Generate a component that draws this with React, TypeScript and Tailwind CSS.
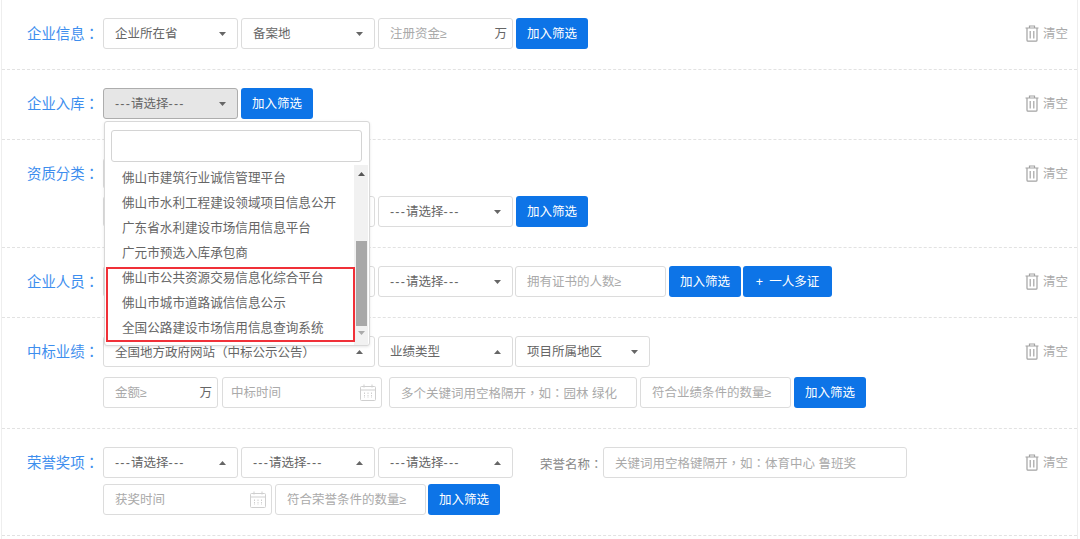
import type { ReactNode } from "react";

// 全角标点在参考图里是居中的，SC 字体偏左下，这里单独换 TC
function P({ children }: { children: ReactNode }) {
	return <span style={{ fontFamily: '"Noto Sans CJK TC", sans-serif' }}>{children}</span>;
}

const PICK = (
	<>
		<span className="tracking-[1.2px]">---</span>请选择<span className="tracking-[1.2px]">---</span>
	</>
);

function Caret({ up = false }: { up?: boolean }) {
	return (
		<svg width="7" height="4" viewBox="0 0 7 4" className="shrink-0">
			<path d={up ? "M3.5 0L7 4H0Z" : "M0 0H7L3.5 4Z"} fill="#666" />
		</svg>
	);
}

function Trash() {
	return (
		<svg width="14" height="17" viewBox="0 0 14 17" fill="none" stroke="#a3a3a3" strokeWidth="1.2">
			<path d="M0.5 3H13.5M4.5 3V1H9.5V3M2 3V15.2C2 15.8 2.4 16.2 3 16.2H11C11.6 16.2 12 15.8 12 15.2V3M5.2 6V13.5M8.8 6V13.5" />
		</svg>
	);
}

function Calendar() {
	return (
		<svg width="16" height="17" viewBox="0 0 16 17" fill="none" stroke="#cfcfcf" strokeWidth="1">
			<rect x="0.5" y="2.5" width="15" height="14" rx="1" />
			<path d="M0.5 6H15.5M4 0.5V3.5M12 0.5V3.5" />
			<path d="M4.5 8.5V14M8 8.5V14M11.5 8.5V14" strokeDasharray="1.5 1" />
		</svg>
	);
}

function Select({ text, width, up, open }: { text?: ReactNode; width: string; up?: boolean; open?: boolean }) {
	return (
		<div
			className={`${width} flex h-[31px] shrink-0 items-center justify-between rounded-[3px] border px-[11px] text-[12.5px] text-[#666] ${
				open ? "border-[#adadad] bg-[#e6e6e6]" : "border-[#dcdcdc] bg-white"
			}`}
		>
			<span className="whitespace-nowrap pt-[2px]">{text}</span>
			<Caret up={up} />
		</div>
	);
}

function Field({
	text,
	width,
	unit,
	date,
	textClass = "",
}: {
	text: ReactNode;
	width: string;
	unit?: string;
	date?: boolean;
	textClass?: string;
}) {
	return (
		<div
			className={`${width} flex h-[31px] shrink-0 items-center justify-between rounded-[3px] border border-[#dcdcdc] bg-white pl-[11px] pr-[5px] text-[12.5px] text-[#aaa]`}
		>
			<span className={`whitespace-nowrap pt-[2px] ${textClass}`}>{text}</span>
			{unit && <span className="pt-[2px] text-[#666]">{unit}</span>}
			{date && <Calendar />}
		</div>
	);
}

function FilterButton({ children = "加入筛选", width = "w-[72px]" }: { children?: ReactNode; width?: string }) {
	return (
		<button className={`${width} h-[31px] shrink-0 whitespace-nowrap rounded-[3px] bg-[#0d74e7] pt-[2px] text-[12.5px] text-white`}>
			{children}
		</button>
	);
}

function Row({ label, gap = "gap-y-0", children }: { label: string; gap?: string; children: ReactNode }) {
	return (
		<section className="flex items-start border-b border-dashed border-[#e2e2e2] pb-[20px] pt-[18px]">
			<div className="w-[101px] shrink-0 whitespace-nowrap pl-[25px] text-[14.4px] leading-[30px] text-[#3d8eee]">
				{label}
				<P>：</P>
			</div>
			<div className={`flex flex-1 flex-col ${gap}`}>{children}</div>
			<div className="mr-[9px] flex h-[31px] shrink-0 items-center gap-[4px] text-[12.5px] text-[#aaa]">
				<Trash />
				<span className="pt-[2px]">清空</span>
			</div>
		</section>
	);
}

const options = [
	"佛山市建筑行业诚信管理平台",
	"佛山市水利工程建设领域项目信息公开",
	"广东省水利建设市场信用信息平台",
	"广元市预选入库承包商",
	"佛山市公共资源交易信息化综合平台",
	"佛山市城市道路诚信信息公示",
	"全国公路建设市场信用信息查询系统",
];

function Dropdown() {
	return (
		<div className="absolute left-[1px] top-[33px] z-10 h-[225px] w-[266px] rounded-[3px] border border-[#d8d8d8] bg-white shadow-[0_1px_3px_rgba(0,0,0,0.1)]">
			<div className="mx-[6px] mt-[8px] h-[32px] w-[251px] rounded-[3px] border border-[#d4d4d4]" />
			<div className="mt-[3px] flex">
				<ul className="w-[249px]">
					{options.map((o) => (
						<li key={o} className="h-[25px] whitespace-nowrap pl-[17px] text-[12.6px] leading-[26px] text-[#666]">
							{o}
						</li>
					))}
				</ul>
				<div className="flex h-[180px] w-[14px] flex-col items-center bg-[#f1f1f1]">
					<svg width="7" height="4" viewBox="0 0 7 4" className="mt-[7px]">
						<path d="M3.5 0L7 4H0Z" fill="#555" />
					</svg>
					<div className="mt-[65px] h-[85px] w-[11px] bg-[#a8a8a8]" />
					<svg width="7" height="4" viewBox="0 0 7 4" className="mt-[5px]">
						<path d="M0 0H7L3.5 4Z" fill="#aaa" />
					</svg>
				</div>
			</div>
			<div className="absolute left-[1px] top-[145px] h-[75px] w-[249px] border-2 border-[#f03038]" />
		</div>
	);
}

export default function App() {
	return (
		<div
			className="mx-[1px] h-[539px] w-[1077px] overflow-hidden border-x border-[#eeeeee] bg-white"
			style={{ fontFamily: '"Liberation Sans", "Noto Sans CJK SC", sans-serif' }}
		>
			<Row label="企业信息">
				<div className="flex gap-[3px]">
					<Select text="企业所在省" width="w-[135px]" />
					<Select text="备案地" width="w-[134px]" />
					<Field text="注册资金≥" width="w-[135px]" unit="万" />
					<FilterButton />
				</div>
			</Row>

			<Row label="企业入库">
				<div className="flex gap-[3px]">
					<div className="relative">
						<Select text={PICK} width="w-[135px]" open />
						<Dropdown />
					</div>
					<FilterButton />
				</div>
			</Row>

			<Row label="资质分类" gap="gap-y-[7px]">
				<Select width="w-[135px]" />
				<div className="flex gap-[3px]">
					<Select width="w-[272px]" />
					<Select text={PICK} width="w-[135px]" />
					<FilterButton />
				</div>
			</Row>

			<Row label="企业人员">
				<div className="flex gap-[3px]">
					<Select width="w-[272px]" />
					<Select text={PICK} width="w-[135px]" />
					<Field text="拥有证书的人数≥" width="-ml-[1px] w-[151px]" />
					<FilterButton />
					<FilterButton width="-ml-[1px] w-[89px]">
						<span className="mr-[6px]">+</span>一人多证
					</FilterButton>
				</div>
			</Row>

			<Row label="中标业绩" gap="gap-y-[10px]">
				<div className="flex gap-[3px]">
					<Select
						text={
							<>
								全国地方政府网站<P>（</P>中标公示公告<P>）</P>
							</>
						}
						width="w-[272px]"
						up
					/>
					<Select text="业绩类型" width="w-[135px]" up />
					<Select text="项目所属地区" width="-ml-[1px] w-[135px]" />
				</div>
				<div className="flex gap-[3px]">
					<Field text="金额≥" width="w-[115px]" unit="万" />
					<Field text="中标时间" width="ml-[1px] w-[160px]" date textClass="-ml-[3px]" />
					<Field
						text={
							<>
								多个关键词用空格隔开<P>，</P>如<P>：</P>园林 绿化
							</>
						}
						width="ml-[4px] w-[248px]"
					/>
					<Field text="符合业绩条件的数量≥" width="w-[151px]" />
					<FilterButton />
				</div>
			</Row>

			<Row label="荣誉奖项" gap="gap-y-[6px]">
				<div className="flex h-[31px] gap-[3px]">
					<Select text={PICK} width="w-[135px]" up />
					<Select text={PICK} width="w-[134px]" up />
					<Select text={PICK} width="w-[135px]" up />
					<span className="ml-[24px] h-[31px] w-[60px] overflow-visible whitespace-nowrap text-[12.5px] leading-[33px] text-[#888]">
						荣誉名称<P>：</P>
					</span>
					<Field
						text={
							<>
								关键词用空格键隔开<P>，</P>如<P>：</P>体育中心 鲁班奖
							</>
						}
						width="w-[304px]"
					/>
				</div>
				<div className="flex gap-[3px]">
					<Field text="获奖时间" width="w-[169px]" date />
					<Field text="符合荣誉条件的数量≥" width="w-[151px]" />
					<FilterButton width="-ml-[1px] w-[72px]" />
				</div>
			</Row>
		</div>
	);
}
